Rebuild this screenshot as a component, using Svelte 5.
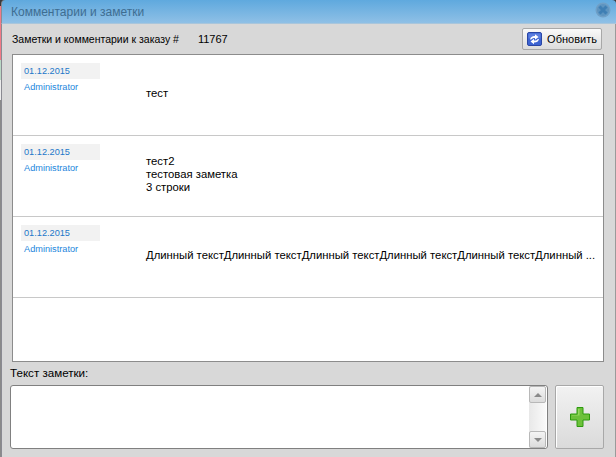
<script lang="ts">
  const notes = [
    { date: "01.12.2015", author: "Administrator", lines: ["тест"] },
    { date: "01.12.2015", author: "Administrator", lines: ["тест2", "тестовая заметка", "3 строки"] },
    {
      date: "01.12.2015",
      author: "Administrator",
      lines: ["Длинный текстДлинный текстДлинный текстДлинный текстДлинный текстДлинный ..."],
    },
  ];
</script>

<div class="window">
  <header class="titlebar">
    <span class="title">Комментарии и заметки</span>
    <span class="close" aria-label="Закрыть">
      <svg width="16" height="16" viewBox="0 0 16 16">
        <circle cx="8" cy="8" r="7.500" fill="#6f9fc6" />
        <circle cx="8" cy="8" r="6" fill="#5d94c0" />
        <path d="M4.500 4.500l7 7M11.500 4.500l-7 7" stroke="#3f7fb4" stroke-width="3" />
      </svg>
    </span>
  </header>

  <div class="body">
    <div class="toolbar">
      <span class="order">Заметки и комментарии к заказу #</span>
      <span class="num">11767</span>
      <button type="button" class="refresh">
        <svg width="15" height="14" viewBox="0 0 15 14">
          <rect x="0.500" y="0.500" width="14" height="13" rx="1.500" fill="#3c63d2" stroke="#2a46a4" />
          <rect x="1.500" y="1.500" width="12" height="5" fill="#6f8fe6" opacity="0.6" />
          <path d="M3 7.500C3.500 5 5.500 3.800 8 4V2.300l3.500 2.700L8 7.700V6C6 5.800 4.800 6.400 4.300 7.500z" fill="#fff" />
          <path d="M12 7c-.5 2.500-2.500 3.700-5 3.500v1.700L3.500 9.500 7 6.800v1.700c2 .2 3.200-.4 3.700-1.500z" fill="#fff" />
        </svg>
        Обновить
      </button>
    </div>

    <div class="list">
      {#each notes as note}
        <div class="row">
          <div class="meta">
            <div class="date">{note.date}</div>
            <div class="author">{note.author}</div>
          </div>
          <div class="text">
            {#each note.lines as line}
              <div class="line">{line}</div>
            {/each}
          </div>
        </div>
      {/each}
    </div>

    <div class="label">Текст заметки:</div>
    <div class="composer">
      <div class="input">
        <div class="scrollbar">
          <span class="arrow"><i class="up"></i></span>
          <span class="arrow"><i class="down"></i></span>
        </div>
      </div>
      <button type="button" class="add" aria-label="Добавить">
        <svg width="20" height="20" viewBox="0 0 20 20">
          <path d="M7 0.500h6v6.500h6.500v6H13v6.500H7V13H0.500V7H7z" fill="#6cc13a" stroke="#2d9a0e" />
          <path d="M8 8V2h1.500v6.500H2V8z" fill="#a5e070" opacity="0.7" />
        </svg>
      </button>
    </div>
  </div>
</div>

<style>
  :global(body) {
    margin: 0;
  }
  .window {
    box-sizing: border-box;
    width: 616px;
    height: 457px;
    padding-left: 1px;
    display: flex;
    flex-direction: column;
    /* desktop showing through behind the dialog's left edge */
    background: linear-gradient(#3a3a3a 0 6px, #f27a86 6px 60px, #b9d8c4 60px 80px, #ececec 80px 100px, #8a8a8a 100px);
    font-family: "Liberation Sans", Arial, sans-serif;
    font-size: 11px;
    color: #000;
    overflow: hidden;
  }
  .titlebar {
    box-sizing: border-box;
    height: 24px;
    flex: none;
    display: flex;
    align-items: center;
    justify-content: space-between;
    padding: 0 5px 0 9px;
    background: linear-gradient(#5fa9de, #8fc0e6);
    border-top-left-radius: 4px;
    border-top-right-radius: 4px;
    border-left: 1px solid #8a8a92;
    border-bottom: 1px solid #a9c6dc;
  }
  .title {
    color: #3e6d91;
    font-size: 12px;
  }
  .close {
    display: flex;
    margin-top: -3px;
  }
  .body {
    flex: 1;
    min-height: 0;
    display: flex;
    flex-direction: column;
    padding: 0 11px 0 8px;
    background: #d8d8d8;
    border-left: 1px solid #8a8a92;
    border-right: 1px solid #9a9a9a;
  }
  .toolbar {
    height: 30px;
    flex: none;
    display: flex;
    align-items: center;
    padding-left: 2px;
  }
  .order {
    font-size: 10.500px;
  }
  .num {
    margin-left: 19px;
  }
  .refresh {
    width: 80px;
    height: 22px;
    margin-left: auto;
    margin-right: 2px;
    display: flex;
    align-items: center;
    justify-content: center;
    gap: 5px;
    padding: 0;
    font: inherit;
    background: linear-gradient(#fafafa, #dcdcdc);
    border: 1px solid #a8a8a8;
    border-radius: 2px;
  }
  .list {
    box-sizing: border-box;
    height: 308px;
    flex: none;
    margin-left: 2px;
    background: #fff;
    border: 1px solid #8c8c8c;
  }
  .row {
    box-sizing: border-box;
    height: 81px;
    padding: 0 8px;
    display: flex;
    border-bottom: 1px solid #c8c8c8;
  }
  .meta {
    width: 79px;
    flex: none;
    margin-top: 8px;
  }
  .date {
    height: 16px;
    line-height: 16px;
    padding-left: 3px;
    background: #f2f2f2;
    color: #1c77c9;
    font-size: 9.200px;
  }
  .author {
    margin-top: 2px;
    padding-left: 3px;
    line-height: 12px;
    color: #1c86dc;
    font-size: 9.200px;
  }
  .text {
    flex: 1;
    min-width: 0;
    align-self: center;
    margin: 0 0 4px 46px;
    font-size: 11.300px;
  }
  .line {
    line-height: 13px;
    white-space: nowrap;
  }
  .label {
    height: 19px;
    margin-top: 4px;
    line-height: 13px;
    font-size: 11.600px;
  }
  .composer {
    display: flex;
    gap: 7px;
    height: 64px;
  }
  .input {
    box-sizing: border-box;
    width: 538px;
    background: #fff;
    border: 1px solid #808080;
    border-radius: 3px;
    display: flex;
    justify-content: flex-end;
  }
  .scrollbar {
    width: 17px;
    margin-right: 1px;
    display: flex;
    flex-direction: column;
    justify-content: space-between;
    background: linear-gradient(90deg, #e8e8e8, #fafafa);
  }
  .arrow {
    box-sizing: border-box;
    height: 17px;
    display: flex;
    align-items: center;
    justify-content: center;
    background: linear-gradient(#f4f4f4, #dcdcdc);
    border: 1px solid #b8b8b8;
    border-radius: 2px;
  }
  .arrow i {
    width: 0;
    height: 0;
    border-left: 4px solid transparent;
    border-right: 4px solid transparent;
  }
  .up {
    border-bottom: 4px solid #8a8a8a;
  }
  .down {
    border-top: 4px solid #8a8a8a;
  }
  .add {
    box-sizing: border-box;
    width: 49px;
    height: 64px;
    padding: 0;
    display: flex;
    align-items: center;
    justify-content: center;
    background: linear-gradient(#f2f2f2, #dadada);
    border: 1px solid #a8a8a8;
    border-radius: 2px;
    box-shadow: inset 1px 1px 0 #fff;
  }
</style>
